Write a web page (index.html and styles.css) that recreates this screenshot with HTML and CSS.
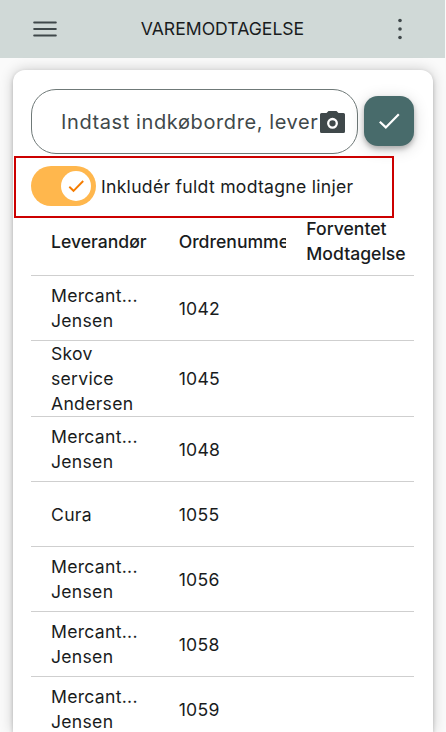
FILE: index.html
```html
<!DOCTYPE html>
<html lang="da">
<head>
    <meta charset="UTF-8">
    <meta name="viewport" content="width=device-width, initial-scale=1.0">
    <title>Varemodtagelse</title>
    <link rel="stylesheet" href="styles.css">
</head>
<body>
    <header class="topbar">
        <svg class="icon" width="24" height="24" viewBox="0 0 24 24">
            <path d="M1.1 5.5h21.8M1.1 12h21.8M1.1 18.5h21.8" fill="none" stroke="#3f484a" stroke-width="1.8" stroke-linecap="round"/>
        </svg>
        <h1>VAREMODTAGELSE</h1>
        <svg class="icon" width="24" height="24" viewBox="0 0 24 24" fill="#3f484a">
            <circle cx="12" cy="3.5" r="1.8"/>
            <circle cx="12" cy="12" r="1.8"/>
            <circle cx="12" cy="20.5" r="1.8"/>
        </svg>
    </header>
    <main class="card">
        <div class="search-row">
            <div class="search-field">
                <span class="placeholder">Indtast indkøbordre, lever</span>
                <svg class="camera" width="25" height="22" viewBox="0 0 25 22">
                    <path d="M8.5 0h8L18.5 2H23.500Q25 2 25 3.500V20.500Q25 22 23.500 22H1.500Q0 22 0 20.500V3.500Q0 2 1.500 2H6.500Z" fill="#3f484a"/>
                    <circle cx="12.500" cy="12.300" r="4.300" fill="none" stroke="#fff" stroke-width="2.300"/>
                </svg>
            </div>
            <button class="confirm-btn" aria-label="OK">
                <svg width="24" height="24" viewBox="0 0 24 24">
                    <path d="M2.800 12.700l6 5.700L21.800 5.200" fill="none" stroke="#fff" stroke-width="2.200"/>
                </svg>
            </button>
        </div>
        <div class="toggle-row">
            <span class="toggle">
                <span class="knob">
                    <svg width="20" height="20" viewBox="0 0 20 20">
                        <path d="M3.300 10.800l4.200 4L17.200 5" fill="none" stroke="#f57c00" stroke-width="1.900"/>
                    </svg>
                </span>
            </span>
            <span class="toggle-label">Inkludér fuldt modtagne linjer</span>
        </div>
        <table>
            <thead>
                <tr>
                    <th>Leverandør</th>
                    <th><div class="clip">Ordrenummer</div></th>
                    <th>Forventet Modtagelse</th>
                </tr>
            </thead>
            <tbody>
                <tr><td>Mercant...<br>Jensen</td><td>1042</td><td></td></tr>
                <tr class="tall"><td>Skov<br>service<br>Andersen</td><td>1045</td><td></td></tr>
                <tr><td>Mercant...<br>Jensen</td><td>1048</td><td></td></tr>
                <tr><td>Cura</td><td>1055</td><td></td></tr>
                <tr><td>Mercant...<br>Jensen</td><td>1056</td><td></td></tr>
                <tr><td>Mercant...<br>Jensen</td><td>1058</td><td></td></tr>
                <tr><td>Mercant...<br>Jensen</td><td>1059</td><td></td></tr>
            </tbody>
        </table>
    </main>
</body>
</html>
```
FILE: styles.css
```css
* {
    box-sizing: border-box;
}

html {
    height: 100%;
    overflow: hidden;
}

body {
    font-family: Inter, sans-serif;
    margin: 0;
    height: 100%;
    overflow: hidden;
    background: #fafafa;
    color: #191c1d;
    font-size: 17.6px;
    line-height: 25px;
}

.topbar {
    display: flex;
    align-items: center;
    justify-content: space-between;
    height: 58px;
    margin-right: 1px;
    padding: 0 33px;
    background: #d0d9d7;
}

.topbar h1 {
    margin: 0;
    padding-bottom: 2px;
    font-size: 17.6px;
    font-weight: 400;
}

.icon {
    display: block;
}

.card {
    width: 420px;
    height: 662px;
    margin: 12px 0 0 13px;
    padding: 19px 19px 0 18px;
    background: #fff;
    border-radius: 12px 12px 0 0;
    box-shadow: 0 0 14px rgba(0, 0, 0, 0.2), 0 2px 4px rgba(0, 0, 0, 0.2);
}

.search-row {
    display: flex;
    align-items: flex-start;
    gap: 6px;
}

.search-field {
    display: flex;
    align-items: center;
    width: 327px;
    height: 65px;
    padding: 0 12px 0 29px;
    border: 1px solid #6f7978;
    border-radius: 25px;
}

.placeholder {
    flex: 1;
    min-width: 0;
    padding-top: 1px;
    white-space: nowrap;
    font-size: 20px;
    letter-spacing: 0.6px;
    color: #3f484a;
}

.camera {
    flex: none;
}

.confirm-btn {
    display: flex;
    align-items: center;
    justify-content: center;
    width: 50px;
    height: 50px;
    margin-top: 7px;
    padding: 0;
    border: none;
    border-radius: 14px;
    background: #486b6b;
    box-shadow: 0 3px 5px rgba(0, 0, 0, 0.25), 0 3px 16px rgba(0, 0, 0, 0.16);
}

.toggle-row {
    position: relative;
    display: flex;
    align-items: center;
    gap: 5px;
    height: 40px;
    margin-top: 12px;
}

/* red marking around the toggle */
.toggle-row::after {
    content: "";
    position: absolute;
    top: -10px;
    left: -17px;
    width: 376px;
    height: 58px;
    border: 2px solid #c00;
}

.toggle {
    display: flex;
    align-items: center;
    justify-content: flex-end;
    width: 65px;
    height: 40px;
    padding-right: 5px;
    border-radius: 20px;
    background: #ffb74d;
}

.knob {
    display: flex;
    align-items: center;
    justify-content: center;
    width: 30px;
    height: 30px;
    border-radius: 50%;
    background: #fff;
}

.toggle-label {
    letter-spacing: 0.28px;
}

table {
    width: 383px;
    margin-top: 1px;
    table-layout: fixed;
    border-collapse: separate;
    border-spacing: 0;
}

th, td {
    height: 65px;
    padding: 0 0 0 20px;
    text-align: left;
    vertical-align: middle;
    border-bottom: 1px solid #cfcfcf;
    letter-spacing: 0.28px;
}

th {
    height: 69px;
    font-weight: 500;
    letter-spacing: 0;
}

.clip {
    overflow: hidden;
}

.tall td {
    height: 76px;
}
```
